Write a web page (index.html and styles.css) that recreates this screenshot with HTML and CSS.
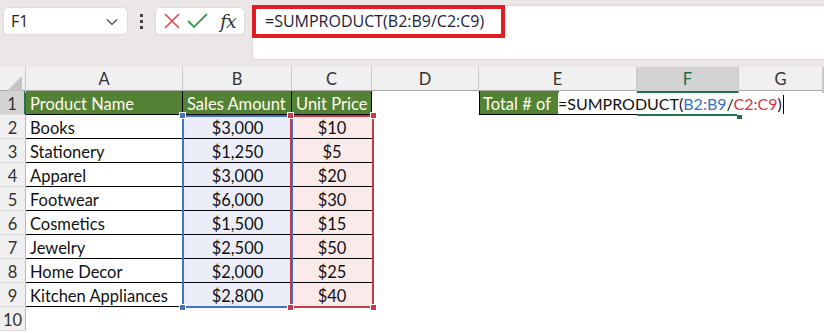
FILE: index.html
```html
<!DOCTYPE html>
<html lang="en">
<head>
    <meta charset="UTF-8">
    <title>SUMPRODUCT divide</title>
    <link rel="stylesheet" href="styles.css">
</head>
<body>
    <div class="toolbar">
        <div class="namebox">
            <span>F1</span>
            <svg class="chevron" width="12" height="8" viewBox="0 0 12 8"><path d="M1 1.5 L6 6.5 L11 1.5" fill="none" stroke="#444" stroke-width="1.2"/></svg>
        </div>
        <div class="dots"><i></i><i></i><i></i></div>
        <div class="fxbox">
            <svg width="20" height="20" viewBox="0 0 20 20"><path d="M3 3 L17 17 M17 3 L3 17" stroke="#e5484d" stroke-width="1.6" fill="none"/></svg>
            <svg width="24" height="20" viewBox="0 0 24 20"><path d="M2 10 L8 16 L21 3" stroke="#3e9b51" stroke-width="1.8" fill="none"/></svg>
            <span class="fx">fx</span>
        </div>
        <div class="formula-bar">
            <div class="formula-focus">=SUMPRODUCT(B2:B9/C2:C9)</div>
        </div>
    </div>

    <div class="sheet">
        <div class="row colhead">
            <div class="corner"><span></span></div>
            <div>A</div><div>B</div><div>C</div><div>D</div><div>E</div>
            <div class="active-col">F</div><div>G</div><div></div>
        </div>
        <div class="row">
            <div class="rh active-row">1</div>
            <div class="cell th">Product Name</div>
            <div class="cell th">Sales Amount</div>
            <div class="cell th">Unit Price</div>
            <div class="cell"></div>
            <div class="cell label"><span>Total # of</span></div>
            <div class="cell"></div><div class="cell"></div><div class="cell"></div>
        </div>
        <div class="row"><div class="rh">2</div><div class="cell td">Books</div><div class="cell td num b">$3,000</div><div class="cell td num c">$10</div><div></div><div></div><div></div><div></div><div></div></div>
        <div class="row"><div class="rh">3</div><div class="cell td">Stationery</div><div class="cell td num b">$1,250</div><div class="cell td num c">$5</div><div></div><div></div><div></div><div></div><div></div></div>
        <div class="row"><div class="rh">4</div><div class="cell td">Apparel</div><div class="cell td num b">$3,000</div><div class="cell td num c">$20</div><div></div><div></div><div></div><div></div><div></div></div>
        <div class="row"><div class="rh">5</div><div class="cell td">Footwear</div><div class="cell td num b">$6,000</div><div class="cell td num c">$30</div><div></div><div></div><div></div><div></div><div></div></div>
        <div class="row"><div class="rh">6</div><div class="cell td">Cosmetics</div><div class="cell td num b">$1,500</div><div class="cell td num c">$15</div><div></div><div></div><div></div><div></div><div></div></div>
        <div class="row"><div class="rh">7</div><div class="cell td">Jewelry</div><div class="cell td num b">$2,500</div><div class="cell td num c">$50</div><div></div><div></div><div></div><div></div><div></div></div>
        <div class="row"><div class="rh">8</div><div class="cell td">Home Decor</div><div class="cell td num b">$2,000</div><div class="cell td num c">$25</div><div></div><div></div><div></div><div></div><div></div></div>
        <div class="row"><div class="rh">9</div><div class="cell td">Kitchen Appliances</div><div class="cell td num b">$2,800</div><div class="cell td num c">$40</div><div></div><div></div><div></div><div></div><div></div></div>
        <div class="row"><div class="rh">10</div><div></div><div></div><div></div><div></div><div></div><div></div><div></div><div></div></div>

        <!-- range highlights while editing -->
        <div class="range range-b"><i class="h tl"></i><i class="h bl"></i></div>
        <div class="range range-c"><i class="h tl"></i><i class="h tr"></i><i class="h bl"></i><i class="h br"></i></div>

        <!-- in-cell editor for F1 -->
        <div class="editor">=SUMPRODUCT(<span class="ref-b">B2:B9</span>/<span class="ref-c">C2:C9</span>)<span class="caret"></span></div>
        <div class="active-line"></div>
        <div class="fill-handle"></div>
    </div>
</body>
</html>
```

FILE: styles.css
```css
body {
    margin: 0;
    width: 824px;
    height: 333px;
    overflow: hidden;
    background: #ffffff;
    font-family: Lato, "Noto Sans", sans-serif;
}

.toolbar {
    height: 67px;
    background: #ebe7e6;
    display: flex;
    align-items: flex-start;
    box-sizing: border-box;
    padding: 7px 0 0 3px;
}

.namebox {
    width: 125px;
    height: 28px;
    box-sizing: border-box;
    background: #fff;
    border: 1px solid #dedad9;
    border-radius: 5px;
    display: flex;
    align-items: center;
    justify-content: space-between;
    padding: 0 9px 0 7px;
    font-family: "Open Sans", sans-serif;
    font-size: 16px;
    color: #222;
}

.chevron {
    margin-top: 2px;
}

.dots {
    width: 27px;
    height: 28px;
    display: flex;
    flex-direction: column;
    align-items: center;
    justify-content: center;
    gap: 3px;
}

.dots i {
    width: 3px;
    height: 3px;
    background: #444;
}

.fxbox {
    width: 90px;
    height: 28px;
    box-sizing: border-box;
    background: #fff;
    border: 1px solid #dedad9;
    border-radius: 5px;
    display: flex;
    align-items: center;
    gap: 4px;
    padding-left: 6px;
}

.fx {
    font-family: "DejaVu Serif", "Liberation Serif", serif;
    font-style: italic;
    font-size: 19px;
    color: #333;
    margin-left: 6px;
    letter-spacing: -1px;
}

.formula-bar {
    margin-left: 7px;
    margin-top: -2px;
    flex: 1;
    height: 53px;
    background: #fff;
    border: 1px solid #dedad9;
    border-right: none;
    border-radius: 5px 0 0 5px;
}

.formula-focus {
    width: 253px;
    height: 33px;
    box-sizing: border-box;
    border: 4px solid #e31b23;
    margin: -1px 0 0 -1px;
    padding-left: 9px;
    font-family: "Open Sans", sans-serif;
    font-size: 16px;
    line-height: 25px;
    color: #1c1c3a;
}

.sheet {
    position: relative;
}

.row {
    display: grid;
    grid-template-columns: 26px 157px 109px 80px 107px 158px 102px 84px 1px;
    height: 24px;
    font-size: 16.5px;
}

.colhead {
    background: #f0f0f0;
    color: #333;
    box-sizing: border-box;
    border-bottom: 1px solid #a8a8a8;
}

.colhead div {
    text-align: center;
    line-height: 25px;
    border-right: 1px solid #c8c8c8;
}

.colhead .active-col {
    background: #d3d3d3;
    color: #1e6e40;
    border-bottom: 2px solid #217346;
    line-height: 24px;
}

.corner {
    position: relative;
}

.corner span {
    position: absolute;
    right: 3px;
    bottom: 2px;
    border-style: solid;
    border-width: 0 0 15px 15px;
    border-color: transparent transparent #c4c4c4 transparent;
}

.rh {
    background: #f0f0f0;
    color: #333;
    text-align: center;
    padding-top: 3px;
    line-height: 20px;
    border-right: 1px solid #b8b8b8;
    border-bottom: 1px solid #dadada;
    box-sizing: border-box;
}

.rh.active-row {
    background: #d3d3d3;
    border-right: 2px solid #217346;
}

.cell {
    box-sizing: border-box;
    padding-top: 3px;
    line-height: 20px;
    white-space: nowrap;
    overflow: hidden;
}

.th {
    background: #548235;
    color: #fffbef;
    padding-left: 4px;
    border-right: 1px solid #000;
    border-bottom: 1px solid #000;
}

.td {
    padding-left: 4px;
    border-bottom: 1px solid #000;
    color: #111;
}

.num {
    text-align: center;
    padding-left: 0;
}

.b {
    background: #ebeef8;
}

.c {
    background: #fbeaea;
}

.label {
    border-left: 1px solid #000;
    border-bottom: 1px solid #000;
    padding-top: 0;
}

.label span {
    display: inline-block;
    width: 79px;
    height: 23px;
    padding-top: 3px;
    background: #548235;
    color: #fffbef;
    padding-left: 3px;
    box-sizing: border-box;
}

.range {
    position: absolute;
    top: 48px;
    height: 193px;
    box-sizing: border-box;
    border: 2px solid;
}

.range-b {
    left: 182px;
    width: 111px;
    border-color: #4472c4;
}

.range-c {
    left: 290px;
    width: 84px;
    border-color: #c73a45;
}

.range .h {
    position: absolute;
    width: 5px;
    height: 5px;
    border: 1px solid #fff;
}

.range-b .h { background: #4472c4; }
.range-c .h { background: #c73a45; }

.h.tl { left: -5px; top: -5px; }
.h.tr { right: -5px; top: -5px; }
.h.bl { left: -5px; bottom: -5px; }
.h.br { right: -5px; bottom: -5px; }

.editor {
    position: absolute;
    left: 558px;
    top: 26px;
    height: 21px;
    line-height: 21px;
    font-size: 16px;
    color: #111;
    background: #fff;
    padding-right: 2px;
    white-space: nowrap;
}

.ref-b { color: #3a6fc4; }
.ref-c { color: #d1363e; }

.caret {
    display: inline-block;
    width: 1px;
    height: 19px;
    background: #000;
    vertical-align: -4px;
    margin-left: 1px;
}

.active-line {
    position: absolute;
    left: 637px;
    top: 47px;
    width: 100px;
    height: 2px;
    background: #217346;
}

.fill-handle {
    position: absolute;
    left: 737px;
    top: 48px;
    width: 5px;
    height: 4px;
    background: #217346;
}
```
